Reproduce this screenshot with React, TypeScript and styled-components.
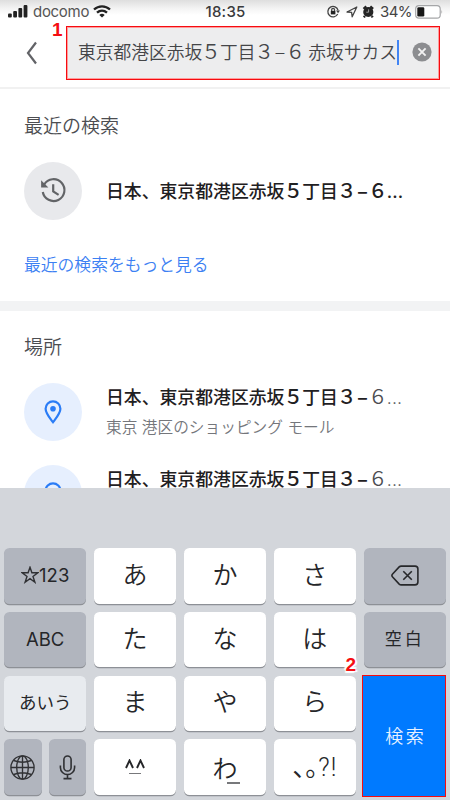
import React from "react";
import styled, { createGlobalStyle } from "styled-components";

const Global = createGlobalStyle`
  * { box-sizing: border-box; }
  body { margin: 0; background: #fff; font-family: Inter, "Noto Sans CJK JP", sans-serif; color: #202124; overflow: hidden; }
  button { font: inherit; padding: 0; border: 0; background: none; color: inherit; }
  svg { display: block; flex: none; }
`;

const Screen = styled.div`
  width: 450px;
  height: 800px;
  display: flex;
  flex-direction: column;
  overflow: hidden;
  background: #fff;
`;

const StatusBar = styled.header`
  height: 25px;
  flex: none;
  display: grid;
  grid-template-columns: 1fr auto 1fr;
  align-items: center;
  padding: 0 7px 2px 8px;
  background: linear-gradient(#dedede, #f4f4f4 35%, #fff 60%);
  font-size: 15.5px;
  color: #3a3a3c;
`;

const StatusGroup = styled.div<{ $end?: boolean }>`
  display: flex;
  align-items: center;
  justify-content: ${(p) => (p.$end ? "flex-end" : "flex-start")};
`;

const Carrier = styled.span`
  margin: 0 6px 0 5px;
  letter-spacing: -0.3px;
  width: 54px;
  font-size: 15px;
  color: #555;
`;

const Time = styled.span`
  font-size: 15px;
  font-weight: 500;
  letter-spacing: 0.25px;
`;

const Percent = styled.span`
  margin: 0 4px 0 6px;
  width: 31px;
  font-size: 15px;
  letter-spacing: -0.6px;
  white-space: nowrap;
  color: #444;
`;

const SearchHeader = styled.div`
  height: 64px;
  flex: none;
  display: flex;
  padding: 1px 10px 0 25px;
  border-bottom: 2px solid #f1f1f1;
`;

const Back = styled.button`
  width: 41px;
  height: 53px;
  display: flex;
  align-items: center;
`;

const SearchField = styled.div`
  position: relative;
  width: 374px;
  height: 54px;
  border: 1.5px solid #f60b10;
  outline: 0.5px solid #ff9c9c;
  outline-offset: -2px;
  background: #ededee;
  display: flex;
  align-items: center;
  justify-content: space-between;
  padding: 0 7px 2px 11px;
  font-size: 17.75px;
  color: #444548;
`;

const Query = styled.span`
  white-space: nowrap;
  line-height: 26px;
  padding-top: 2px;
  font-weight: 350;
`;

const Dash = styled.span`
  display: inline-block;
  width: 0.74em;
  text-align: center;
`;

const WideDigit = styled.span`
  display: inline-block;
  width: 1em;
  line-height: 1;

  > span {
    font-size: 1.1em;
    margin: 0 -0.05em;
  }
`;

const Gap = styled.span`
  display: inline-block;
  width: 4px;
`;

const Caret = styled.i`
  width: 2px;
  height: 25px;
  background: #4285f4;
`;

const FieldEnd = styled.span`
  display: flex;
  align-items: center;
  gap: 13px;
`;

const Marker = styled.b<{ $x: number; $y: number }>`
  position: absolute;
  left: ${(p) => p.$x}px;
  top: ${(p) => p.$y}px;
  font: bold 19px/20px "Liberation Sans", sans-serif;
  letter-spacing: 0;
  color: #f50d12;
  text-shadow: 0 0 2px #fff, 2px 1px 1px #fff, -2px -1px 1px #fff, 1px -2px 1px #fff, -1px 2px 1px #fff;
`;

const Results = styled.main`
  height: 399px;
  flex: none;
  overflow: hidden;
`;

const Recent = styled.section`
  height: 212px;
  padding: 23px 24px 0;
`;

const Places = styled.section`
  padding: 22px 24px 0;
  border-top: 10px solid #f2f3f4;
`;

const Heading = styled.h2`
  margin: 0;
  font-size: 19px;
  font-weight: 350;
  line-height: 30px;
  color: #4c4d51;
`;

const Entry = styled.div<{ $top: number }>`
  display: flex;
  align-items: center;
  height: 58px;
  margin-top: ${(p) => p.$top}px;
`;

const Disc = styled.div<{ $blue?: boolean }>`
  width: 58px;
  height: 58px;
  border-radius: 50%;
  display: grid;
  place-items: center;
  background: ${(p) => (p.$blue ? "#e6effe" : "#e8e9ec")};
  color: ${(p) => (p.$blue ? "#2a7cf6" : "#626467")};
`;

const EntryText = styled.div`
  margin-left: 24px;
  padding-top: 2px;
  white-space: nowrap;
`;

const Title = styled.div`
  font-size: 17.85px;
  font-weight: 500;
  line-height: 26px;
  color: #1f2022;
`;

const Rest = styled.span`
  font-weight: 350;
  color: #4b4c50;
`;

const Detail = styled.div`
  margin-top: 4px;
  font-size: 15.7px;
  font-weight: 350;
  line-height: 26px;
  color: #74767b;
`;

const More = styled.a`
  display: block;
  margin-top: 32px;
  font-size: 16.8px;
  font-weight: 350;
  line-height: 26px;
  color: #3b80f3;
`;

const Keyboard = styled.footer`
  height: 312px;
  flex: none;
  background: #d3d6db;
  padding: 60px 4px 0;
  display: grid;
  grid-template-columns: repeat(5, 82.4px);
  grid-template-rows: repeat(4, 55.5px);
  column-gap: 7.5px;
  row-gap: 8.3px;
`;

const Key = styled.button<{ $tone?: "dark" | "pale"; $size?: number; $spacing?: number; $lift?: number }>`
  display: flex;
  align-items: center;
  justify-content: center;
  min-width: 0;
  padding-bottom: ${(p) => p.$lift ?? 0}px;
  border-radius: 5.5px;
  background: ${(p) => (p.$tone === "dark" ? "#b1b5be" : p.$tone === "pale" ? "#e8ebef" : "#fff")};
  box-shadow: 0 1.3px 0 #8d9096;
  font-size: ${(p) => p.$size ?? 25}px;
  font-weight: ${(p) => (p.$tone ? 400 : 350)};
  line-height: 1.2;
  letter-spacing: ${(p) => p.$spacing ?? 0}px;
  white-space: nowrap;
  color: #252629;
`;

const SplitKeys = styled.div`
  display: grid;
  grid-template-columns: 37.5px 37px;
  justify-content: space-between;
`;

const SearchKey = styled.button`
  position: relative;
  grid-row: 3 / 5;
  grid-column: 5;
  margin: -1px 0 -2px -2px;
  padding-bottom: 2px;
  padding-left: 4px;
  border: 1.5px solid #f60b10;
  background: #007aff;
  color: #e7f1ff;
  font-size: 18px;
  font-weight: 350;
  letter-spacing: 2.5px;
`;

const Underlined = styled.span`
  display: flex;
  flex-direction: column;
  align-items: center;
`;

const Bar = styled.i<{ $w: number; $top: number; $shift?: number }>`
  width: ${(p) => p.$w}px;
  height: 1.5px;
  background: #77787b;
  margin: ${(p) => p.$top}px 0 0 ${(p) => p.$shift ?? 0}px;
`;

const Wa = styled.span`
  line-height: 26px;
  padding-top: 6px;
`;

const Punctuation = styled.span`
  display: flex;
  align-items: baseline;
  font-family: "Noto Sans CJK JP", sans-serif;
  font-feature-settings: "halt";
  font-size: 26px;
`;

const AsciiMarks = styled.span`
  letter-spacing: 1px;
  font-family: Roboto, sans-serif;
  font-weight: 300;
  font-size: 25px;
`;

const Signal = () => (
  <svg width="20" height="13" viewBox="0 0 20 13" fill="#222">
    <rect x="0" y="8.5" width="3.8" height="4" rx="1" />
    <rect x="5.2" y="6" width="3.8" height="6.5" rx="1" />
    <rect x="10.4" y="3" width="3.8" height="9.5" rx="1" />
    <rect x="15.6" y="0" width="3.8" height="12.5" rx="1" />
  </svg>
);

const Wifi = () => (
  <svg width="18" height="13" viewBox="0 0 18 13" fill="none" stroke="#222" strokeWidth="2.3">
    <path d="M1 4.5C5.5 0.2 12.5 0.2 17 4.5" />
    <path d="M4 7.7C7 5 11 5 14 7.7" />
    <path d="M9 12.6L6.3 9.9C8 8.5 10 8.5 11.7 9.9Z" fill="#222" stroke="none" />
  </svg>
);

const StatusIcons = () => (
  <svg width="49" height="15" viewBox="0 0 49 15" fill="none" stroke="#444" strokeWidth="1.3">
    <path d="M12.7 10A5.2 5.2 0 1 1 13.1 6.4" />
    <path d="M11 6.4h4l-1.9 2.8z" fill="#444" stroke="none" />
    <rect x="5.8" y="6.9" width="4.6" height="3.5" fill="#222" stroke="none" />
    <path d="M6.7 7V5.8a1.4 1.4 0 0 1 2.8 0V7" />
    <path d="M22 8L31.8 3L27.2 12.8L26.6 8.3Z" strokeLinejoin="round" />
    <circle cx="43.3" cy="8" r="5.1" fill="#242424" stroke="none" />
    <path d="M38.5 4.9L41.3 2.4M45.3 2.4L48.1 4.9M39.9 12l-1 1.4M46.7 12l1 1.4" stroke="#242424" strokeWidth="2.3" />
    <path d="M43.6 5.4v2.8h-2.3" stroke="#bbb" strokeWidth="0.8" />
  </svg>
);

const Battery = () => (
  <svg width="28" height="14" viewBox="0 0 28 14">
    <rect x=".7" y=".7" width="24.5" height="12.4" rx="3.2" fill="#fff" stroke="#a5a6a8" strokeWidth="1.2" />
    <rect x="2.3" y="2.3" width="7" height="9.2" rx="1.3" fill="#171717" />
    <path d="M26.5 4.7q1.3 2 0 4.4z" fill="#999" />
  </svg>
);

const BackIcon = () => (
  <svg width="14" height="24" viewBox="0 0 14 24" fill="none" stroke="#626367" strokeWidth="2.2">
    <path d="M11 1.5L3 12L11 22.5" />
  </svg>
);

const ClearIcon = () => (
  <svg width="20" height="20" viewBox="0 0 20 20">
    <circle cx="10" cy="10" r="9.6" fill="#8c8d90" />
    <path d="M6.4 6.4l7.2 7.2M13.6 6.4l-7.2 7.2" stroke="#f2f2f2" strokeWidth="1.9" />
  </svg>
);

const HistoryIcon = () => (
  <svg width="28" height="28" viewBox="0 0 28 28" fill="none" stroke="currentColor" strokeWidth="2.2">
    <path d="M5.2 7.5A10.9 10.9 0 1 1 3.8 15" />
    <path d="M2.1 3.2V10.4H9.4z" fill="currentColor" stroke="none" />
    <path d="M14.2 7.2v7.3l5.4 3.4" />
  </svg>
);

const PinIcon = () => (
  <svg width="18" height="24" viewBox="0 0 18 24" fill="none" stroke="currentColor" strokeWidth="2.2">
    <path d="M9 22.2C6.2 18.5 1.6 13.4 1.6 8.7a7.4 7.4 0 0 1 14.8 0C16.4 13.4 11.8 18.5 9 22.2Z" />
    <circle cx="9" cy="8.7" r="2.8" fill="currentColor" stroke="none" />
  </svg>
);

const StarIcon = () => (
  <svg width="18" height="18" viewBox="0 0 18 18" fill="none" stroke="#303134" strokeWidth="1.4">
    <path d="M9 1.3L10.9 6.8H16.8L12 10.4L13.9 16.2L9 12.7L4.1 16.2L6 10.4L1.2 6.8H7.1Z" />
  </svg>
);

const DeleteIcon = () => (
  <svg width="28" height="21" viewBox="0 0 28 21" fill="none" stroke="#27282b" strokeWidth="1.6">
    <path d="M10.2 1.1H24q2.9 0 2.9 2.9v13q0 2.9-2.9 2.9H10.2q-1.2 0-2-.8L1.6 12q-1.4-1.5 0-3L8.2 1.9q.8-.8 2-.8Z" />
    <path d="M12.3 6.2l8.5 8.5M20.8 6.2l-8.5 8.5" />
  </svg>
);

const GlobeIcon = () => (
  <svg width="25" height="25" viewBox="0 0 25 25" fill="none" stroke="#303134" strokeWidth="1.35">
    <circle cx="12.5" cy="12.5" r="11.6" />
    <ellipse cx="12.5" cy="12.5" rx="5.8" ry="11.6" />
    <path d="M12.5 1v23M1 12.5h23M3.7 5.5q8.8 3.5 17.6 0M3.7 19.5q8.8-3.5 17.6 0" />
  </svg>
);

const MicIcon = () => (
  <svg width="17" height="25" viewBox="0 0 17 25" fill="none" stroke="#303134" strokeWidth="1.6">
    <rect x="4.9" y="1" width="7.2" height="15" rx="3.6" />
    <path d="M1.4 10.5v2a7.1 7.1 0 0 0 14.2 0v-2M8.5 19.6V23.4M4.5 23.6h8" />
  </svg>
);

const Digit = ({ children }: { children: string }) => (
  <WideDigit><span>{children}</span></WideDigit>
);

const AddressHead = () => (
  <span>日本、東京都港区赤坂<Digit>５</Digit>丁目<Digit>３</Digit></span>
);

const PlaceEntry = ({ top, detail }: { top: number; detail?: string }) => (
  <Entry $top={top}>
    <Disc $blue><PinIcon /></Disc>
    <EntryText>
      <Title><AddressHead /><Dash>–</Dash><Rest><Digit>６</Digit>...</Rest></Title>
      <Detail>{detail ?? "\u00a0"}</Detail>
    </EntryText>
  </Entry>
);

export default function App() {
  return (
    <>
      <Global />
      <Screen>
        <StatusBar>
          <StatusGroup><Signal /><Carrier>docomo</Carrier><Wifi /></StatusGroup>
          <Time>18:35</Time>
          <StatusGroup $end><StatusIcons /><Percent>34%</Percent><Battery /></StatusGroup>
        </StatusBar>
        <SearchHeader>
          <Back aria-label="戻る"><BackIcon /></Back>
          <SearchField>
            <Marker $x={-15} $y={-7}>1</Marker>
            <Query>東京都港区赤坂<Digit>５</Digit>丁目<Digit>３</Digit><Dash>–</Dash><Digit>６</Digit><Gap />赤坂サカス</Query>
            <FieldEnd><Caret /><ClearIcon /></FieldEnd>
          </SearchField>
        </SearchHeader>
        <Results>
          <Recent>
            <Heading>最近の検索</Heading>
            <Entry $top={20}>
              <Disc><HistoryIcon /></Disc>
              <EntryText><Title><AddressHead /><Dash>–</Dash><Digit>６</Digit>...</Title></EntryText>
            </Entry>
            <More>最近の検索をもっと見る</More>
          </Recent>
          <Places>
            <Heading>場所</Heading>
            <PlaceEntry top={20} detail="東京 港区のショッピング モール" />
            <PlaceEntry top={24} />
          </Places>
        </Results>
        <Keyboard>
          <Key $tone="dark" $size={18.5} $lift={1}><StarIcon />123</Key>
          <Key $lift={2}>あ</Key>
          <Key $lift={2}>か</Key>
          <Key $lift={2}>さ</Key>
          <Key $tone="dark"><DeleteIcon /></Key>
          <Key $tone="dark" $size={18.5} $lift={1}>ABC</Key>
          <Key $lift={2}>た</Key>
          <Key $lift={2}>な</Key>
          <Key $lift={2}>は</Key>
          <Key $tone="dark" $size={17} $spacing={3} $lift={1}>空白</Key>
          <Key $tone="pale" $size={17.5} $lift={1}>あいう</Key>
          <Key $lift={2}>ま</Key>
          <Key $lift={2}>や</Key>
          <Key $lift={2}>ら</Key>
          <SearchKey><Marker $x={-17} $y={-21}>2</Marker>検索</SearchKey>
          <SplitKeys>
            <Key $tone="dark"><GlobeIcon /></Key>
            <Key $tone="dark"><MicIcon /></Key>
          </SplitKeys>
          <Key $size={21} $lift={1}>
            <Underlined>
              <svg width="20" height="10" viewBox="0 0 20 10" fill="none" stroke="#252629" strokeWidth="1.9">
                <path d="M1 9L4.5 1.5L8 9M12 9L15.5 1.5L19 9" />
              </svg>
              <Bar $w={12} $top={4} />
            </Underlined>
          </Key>
          <Key><Underlined><Wa>わ</Wa><Bar $w={13} $top={0} $shift={18} /></Underlined></Key>
          <Key $lift={2}>
            <Punctuation>
              <span>、。</span><AsciiMarks>?!</AsciiMarks>
            </Punctuation>
          </Key>
        </Keyboard>
      </Screen>
    </>
  );
}
